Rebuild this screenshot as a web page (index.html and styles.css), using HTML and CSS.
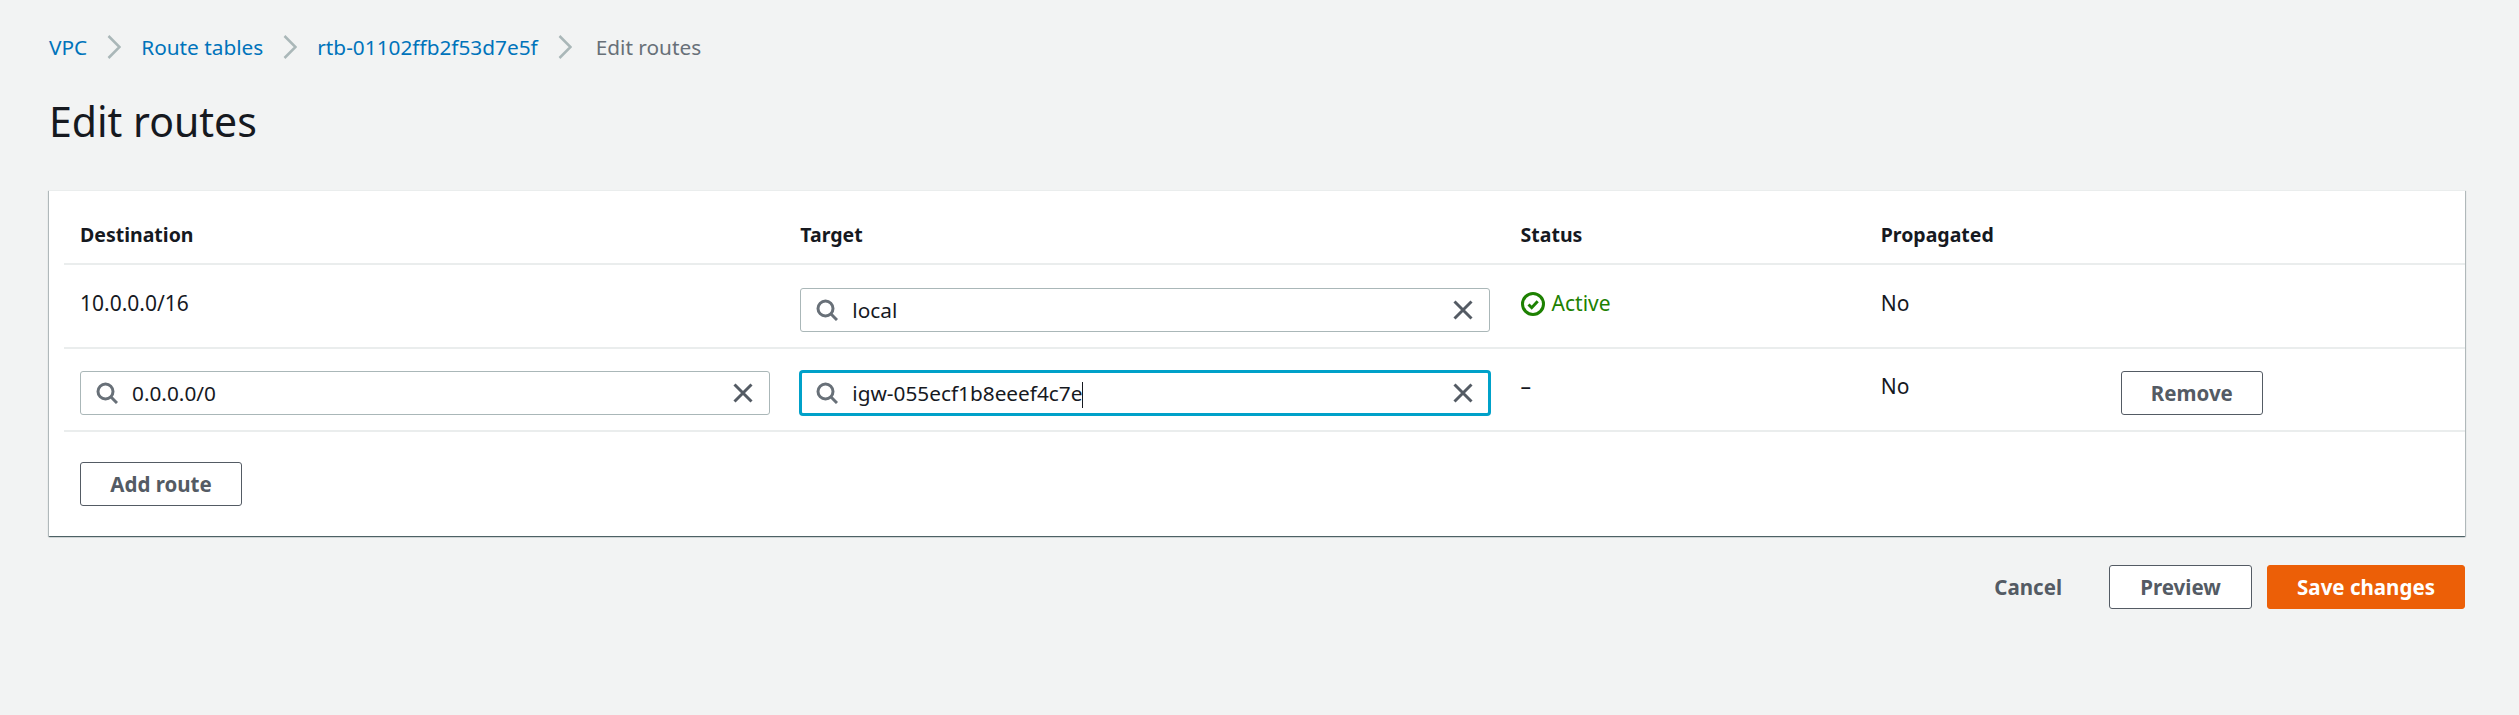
FILE: index.html
```html
<!DOCTYPE html>
<html lang="en">
<head>
    <meta charset="UTF-8">
    <meta name="viewport" content="width=device-width, initial-scale=1.0">
    <title>Edit routes</title>
    <link rel="stylesheet" href="styles.css">
</head>
<body>
    <nav class="breadcrumbs">
        <a href="#">VPC</a>
        <svg class="crumb-sep" viewBox="0 0 14 24"><path d="M1.5 1l11 11-11 11"/></svg>
        <a href="#">Route tables</a>
        <svg class="crumb-sep" viewBox="0 0 14 24"><path d="M1.5 1l11 11-11 11"/></svg>
        <a href="#">rtb-01102ffb2f53d7e5f</a>
        <svg class="crumb-sep" viewBox="0 0 14 24"><path d="M1.5 1l11 11-11 11"/></svg>
        <span class="crumb-current">Edit routes</span>
    </nav>

    <h1 class="page-title">Edit routes</h1>

    <section class="card">
        <div class="routes">
            <div class="row row-head">
                <div class="cell">Destination</div>
                <div class="cell">Target</div>
                <div class="cell">Status</div>
                <div class="cell">Propagated</div>
                <div class="cell"></div>
            </div>

            <div class="row row-first">
                <div class="cell cell-text">10.0.0.0/16</div>
                <div class="cell cell-field">
                    <div class="field">
                        <svg class="icon-search" viewBox="0 0 22 22"><circle cx="9.5" cy="9.5" r="7.5"/><path d="M15 15l6 6"/></svg>
                        <span class="field-value">local</span>
                        <svg class="icon-clear" viewBox="0 0 20 20"><path d="M1.5 1.5l17 17M18.5 1.5l-17 17"/></svg>
                    </div>
                </div>
                <div class="cell cell-text status-active">
                    <svg class="icon-check" viewBox="0 0 24 24"><circle cx="12" cy="12" r="10.5"/><path d="M7.5 12.5l3.2 3.2 6-6.4"/></svg>
                    Active
                </div>
                <div class="cell cell-text">No</div>
                <div class="cell"></div>
            </div>

            <div class="row row-second">
                <div class="cell cell-field">
                    <div class="field">
                        <svg class="icon-search" viewBox="0 0 22 22"><circle cx="9.5" cy="9.5" r="7.5"/><path d="M15 15l6 6"/></svg>
                        <span class="field-value">0.0.0.0/0</span>
                        <svg class="icon-clear" viewBox="0 0 20 20"><path d="M1.5 1.5l17 17M18.5 1.5l-17 17"/></svg>
                    </div>
                </div>
                <div class="cell cell-field">
                    <div class="field field-focus">
                        <svg class="icon-search" viewBox="0 0 22 22"><circle cx="9.5" cy="9.5" r="7.5"/><path d="M15 15l6 6"/></svg>
                        <span class="field-value caret">igw-055ecf1b8eeef4c7e</span>
                        <svg class="icon-clear" viewBox="0 0 20 20"><path d="M1.5 1.5l17 17M18.5 1.5l-17 17"/></svg>
                    </div>
                </div>
                <div class="cell cell-text">–</div>
                <div class="cell cell-text">No</div>
                <div class="cell cell-field">
                    <button class="btn btn-remove" type="button">Remove</button>
                </div>
            </div>
        </div>

        <div class="card-foot">
            <button class="btn btn-add" type="button">Add route</button>
        </div>
    </section>

    <div class="actions">
        <button class="btn btn-link" type="button">Cancel</button>
        <button class="btn btn-preview" type="button">Preview</button>
        <button class="btn btn-primary" type="button">Save changes</button>
    </div>
</body>
</html>
```

FILE: styles.css
```css
body {
    font-family: "Noto Sans", "Open Sans", sans-serif;
    font-size: 21px;
    color: #16191f;
    background-color: #f2f3f3;
    margin: 0;
    padding: 0 54px 0 49px;
    height: 715px;
    box-sizing: border-box;
    overflow: hidden;
}

/* breadcrumbs */
.breadcrumbs {
    display: flex;
    align-items: center;
    height: 24px;
    padding-top: 35px;
    font-size: 20.8px;
}

.breadcrumbs a {
    color: #0073bb;
    text-decoration: none;
}

.crumb-sep {
    width: 14px;
    height: 24px;
    margin: 0 20px;
    fill: none;
    stroke: #aab7b8;
    stroke-width: 2.5;
}

.crumb-current {
    color: #687078;
    margin-left: 4px;
}

.page-title {
    font-size: 41px;
    font-weight: 400;
    line-height: 56px;
    margin: 34px 0 0;
}

/* routes card */
.card {
    margin-top: 41px;
    background-color: #fff;
    border-top: 1px solid #eaeded;
    box-shadow: 0 1px 1px 0 rgba(0, 28, 36, 0.5), 1px 1px 1px 0 rgba(0, 28, 36, 0.2), -1px 1px 1px 0 rgba(0, 28, 36, 0.2);
    height: 346px;
    box-sizing: border-box;
    padding-left: 15px;
}

.row {
    display: grid;
    grid-template-columns: 30% 30% 15% 10% 15%;
    border-bottom: 2px solid #eaeded;
    box-sizing: border-box;
}

.row-head {
    height: 74px;
    padding-top: 14px;
    align-items: center;
    font-weight: 700;
    font-size: 19.5px;
}

.row-first {
    height: 84px;
}

.row-second {
    height: 83px;
}

.cell {
    padding-left: 16px;
    min-width: 0;
}

.cell-text {
    padding-top: 24px;
    line-height: 28px;
    font-size: 21px;
}

.row-second .cell-text {
    padding-top: 23px;
}

.row-first .cell-field {
    padding-top: 23px;
}

.row-second .cell-field {
    padding-top: 22px;
}

.status-active {
    display: flex;
    align-items: flex-start;
    gap: 7px;
    color: #1d8102;
}

.icon-check {
    width: 24px;
    height: 24px;
    margin-top: 3px;
    fill: none;
    stroke: #1d8102;
    stroke-width: 3;
}

/* search inputs */
.field {
    display: flex;
    align-items: center;
    height: 44px;
    box-sizing: border-box;
    width: 690px;
    border: 1px solid #aab7b8;
    border-radius: 3px;
    padding: 0 16px 0 15px;
    background-color: #fff;
    font-size: 20.8px;
}

.field-focus {
    border: 2px solid #00a1c9;
    box-shadow: 0 0 0 1px #00a1c9;
    padding: 0 15px 0 14px;
}

.field-value {
    flex: 1;
    margin-left: 14px;
    white-space: nowrap;
}

.caret::after {
    content: "";
    display: inline-block;
    width: 1px;
    height: 26px;
    background-color: #16191f;
    vertical-align: -7px;
}

.icon-search {
    width: 22px;
    height: 22px;
    flex: none;
    fill: none;
    stroke: #687078;
    stroke-width: 3;
}

.icon-clear {
    width: 20px;
    height: 20px;
    flex: none;
    fill: none;
    stroke: #545b64;
    stroke-width: 3;
}

/* buttons */
.btn {
    font-family: inherit;
    font-size: 20.5px;
    font-weight: 700;
    height: 44px;
    box-sizing: border-box;
    padding: 0;
    border: 1px solid #545b64;
    border-radius: 3px;
    background-color: #fff;
    color: #545b64;
    cursor: pointer;
}

.btn-remove {
    width: 142px;
}

.card-foot {
    padding: 30px 0 0 16px;
}

.btn-add {
    width: 162px;
}

.actions {
    display: flex;
    justify-content: flex-end;
    align-items: center;
    margin-top: 29px;
}

.btn-link {
    border: none;
    background: none;
    margin-right: 47px;
}

.btn-preview {
    width: 143px;
    margin-right: 15px;
}

.btn-primary {
    width: 198px;
    border-color: #ec5f07;
    background-color: #ec5f07;
    color: #fff;
}
```
